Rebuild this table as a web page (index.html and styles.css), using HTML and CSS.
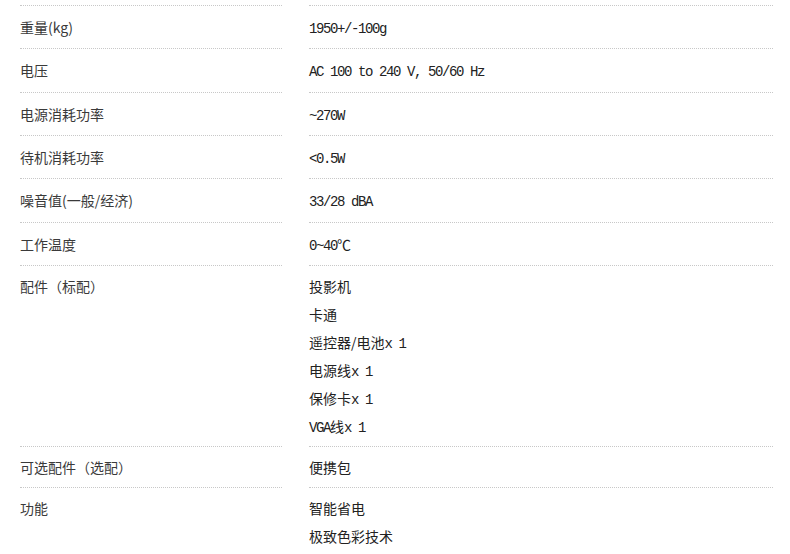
FILE: index.html
```html
<!DOCTYPE html>
<html lang="zh-CN">
<head>
<meta charset="utf-8">
<title>规格参数</title>
<link rel="stylesheet" href="styles.css">
</head>
<body>
<div class="specs">
  <div class="row">
    <div class="label">重量(kg)</div>
    <div class="value"><span class="en">1950+/-100g</span></div>
  </div>
  <div class="row">
    <div class="label">电压</div>
    <div class="value"><span class="en">AC 100 to 240 V, 50/60 Hz</span></div>
  </div>
  <div class="row">
    <div class="label">电源消耗功率</div>
    <div class="value"><span class="en">~270W</span></div>
  </div>
  <div class="row">
    <div class="label">待机消耗功率</div>
    <div class="value"><span class="en">&lt;0.5W</span></div>
  </div>
  <div class="row">
    <div class="label">噪音值(一般/经济)</div>
    <div class="value"><span class="en">33/28 dBA</span></div>
  </div>
  <div class="row">
    <div class="label">工作温度</div>
    <div class="value"><span class="en">0~40</span>℃</div>
  </div>
  <div class="row multi">
    <div class="label">配件（标配）</div>
    <div class="value">
      <div>投影机</div>
      <div>卡通</div>
      <div>遥控器/电池<span class="en">x 1</span></div>
      <div>电源线<span class="en">x 1</span></div>
      <div>保修卡<span class="en">x 1</span></div>
      <div><span class="en">VGA</span>线<span class="en">x 1</span></div>
    </div>
  </div>
  <div class="row multi">
    <div class="label">可选配件（选配）</div>
    <div class="value">便携包</div>
  </div>
  <div class="row multi last">
    <div class="label">功能</div>
    <div class="value">
      <div>智能省电</div>
      <div>极致色彩技术</div>
    </div>
  </div>
</div>
</body>
</html>
```
FILE: styles.css
```css
html, body {
  margin: 0;
  padding: 0;
  background: #fff;
}
body {
  font-family: "Noto Sans CJK SC", "Noto Sans", sans-serif;
  font-size: 14px;
  color: #333;
}
.specs {
  padding: 5px 0 0 20px;
  width: 753px;
}
.row {
  display: grid;
  grid-template-columns: 262px 464px;
  column-gap: 27px;
}
.label,
.value {
  border-top: 1px dotted #c8c8c8;
  padding: 7.17px 0;
  line-height: 28px;
}
.value div {
  height: 28px;
}
.row.multi .label,
.row.multi .value {
  padding: 6px 0;
}
.row.last .label,
.row.last .value {
  padding-bottom: 0;
}
.label {
  color: #3a3a3a;
}
.value {
  color: #222;
}
.en {
  font-family: "Liberation Mono", monospace;
  font-size: 14px;
  line-height: 14px;
  letter-spacing: -1.4px;
}
```
